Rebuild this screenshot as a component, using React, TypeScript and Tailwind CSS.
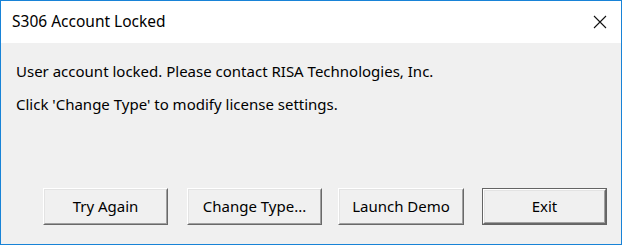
export default function App() {
  const buttons = [
    { label: "Try Again", className: "ml-[42px] w-[125px]", isDefault: false },
    { label: "Change Type...", className: "ml-[19px] w-[135px]", isDefault: false },
    { label: "Launch Demo", className: "ml-[16px] w-[126px]", isDefault: false },
    { label: "Exit", className: "ml-[18px] w-[125px]", isDefault: true },
  ];

  return (
    <div
      className="flex h-[245px] w-[622px] flex-col border border-[#1883d7] bg-[#f0f0f0] text-[#000]"
      style={{ fontFamily: '"Noto Sans", "Open Sans", sans-serif' }}
    >
      {/* Title bar */}
      <div className="flex h-[42px] shrink-0 items-center justify-between bg-white pl-[11px] pr-[12px]">
        <span className="text-[15.5px] leading-none">S306 Account Locked</span>
        <svg width="16" height="16" viewBox="0 0 16 16" className="mr-[1px]">
          <path d="M2 2 L14 14 M14 2 L2 14" stroke="#111" strokeWidth="1.1" />
        </svg>
      </div>

      {/* Body */}
      <div className="flex flex-1 flex-col">
        <div className="flex flex-col gap-[14px] pl-[15px] pt-[19px] text-[15px] leading-[19px]">
          <p>User account locked. Please contact RISA Technologies, Inc.</p>
          <p>Click 'Change Type' to modify license settings.</p>
        </div>

        <div className="mt-[74px] flex">
          {buttons.map((b) => (
            <div
              key={b.label}
              className={`${b.className} h-[37px] ${b.isDefault ? "border border-[#646464]" : ""}`}
            >
              <div className="h-full w-full border border-t-white border-l-white border-r-[#696969] border-b-[#696969]">
                <button className="flex h-full w-full items-center justify-center border border-t-[#e3e3e3] border-l-[#e3e3e3] border-r-[#a0a0a0] border-b-[#a0a0a0] bg-[#f0f0f0] text-[15px]">
                  {b.label}
                </button>
              </div>
            </div>
          ))}
        </div>
      </div>
    </div>
  );
}
